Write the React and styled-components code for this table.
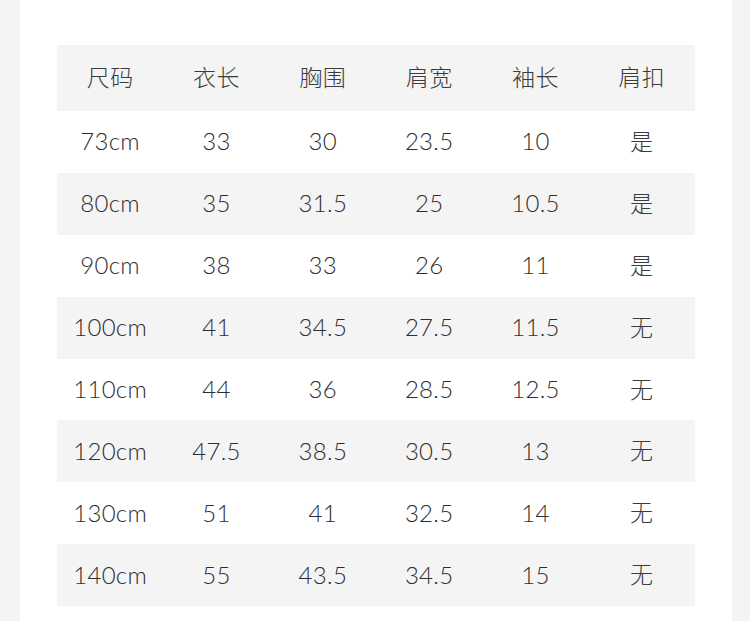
import React from "react";
import styled, { createGlobalStyle } from "styled-components";

const Global = createGlobalStyle`
  html, body { margin: 0; padding: 0; background: #f4f4f4; }
  body { font-family: "Lato", "Noto Sans CJK SC", sans-serif; }
`;

const Page = styled.div`
  width: 750px;
  height: 621px;
  display: flex;
  background: #f4f4f4;
  overflow: hidden;
`;

const Card = styled.div`
  margin-left: 20px;
  width: 712px;
  height: 621px;
  background: #ffffff;
  box-sizing: border-box;
  padding: 45px 0 0 37px;
`;

const Table = styled.div`
  width: 638px;
  display: flex;
  flex-direction: column;
`;

const Row = styled.div`
  display: grid;
  grid-template-columns: repeat(6, 1fr);
  height: ${(p) => (p.$header ? "66px" : "61.9px")};
  background: ${(p) => (p.$shade ? "#f4f4f4" : "#ffffff")};
  align-items: center;
`;

const Cell = styled.div`
  text-align: center;
  color: ${(p) => (p.$cjk ? "#3b3b3b" : "#2e2e2e")};
  font-family: "Lato", "Noto Sans CJK SC", sans-serif;
  font-size: ${(p) => (p.$cjk ? "23px" : "24px")};
  font-weight: 300;
  letter-spacing: ${(p) => (p.$cjk ? "0.5px" : "0.3px")};
  line-height: 1;
  padding-bottom: 1px;
`;

const headers = ["尺码", "衣长", "胸围", "肩宽", "袖长", "肩扣"];
const rows = [
  ["73cm", "33", "30", "23.5", "10", "是"],
  ["80cm", "35", "31.5", "25", "10.5", "是"],
  ["90cm", "38", "33", "26", "11", "是"],
  ["100cm", "41", "34.5", "27.5", "11.5", "无"],
  ["110cm", "44", "36", "28.5", "12.5", "无"],
  ["120cm", "47.5", "38.5", "30.5", "13", "无"],
  ["130cm", "51", "41", "32.5", "14", "无"],
  ["140cm", "55", "43.5", "34.5", "15", "无"],
];

const isCjk = (s) => /[\u4e00-\u9fff]/.test(s);

export default function App() {
  return (
    <>
      <Global />
      <Page>
        <Card>
          <Table>
            <Row $header $shade>
              {headers.map((h) => (
                <Cell key={h} $cjk>
                  {h}
                </Cell>
              ))}
            </Row>
            {rows.map((r, i) => (
              <Row key={r[0]} $shade={i % 2 === 1}>
                {r.map((c, j) => (
                  <Cell key={j} $cjk={isCjk(c)}>
                    {c}
                  </Cell>
                ))}
              </Row>
            ))}
          </Table>
        </Card>
      </Page>
    </>
  );
}
